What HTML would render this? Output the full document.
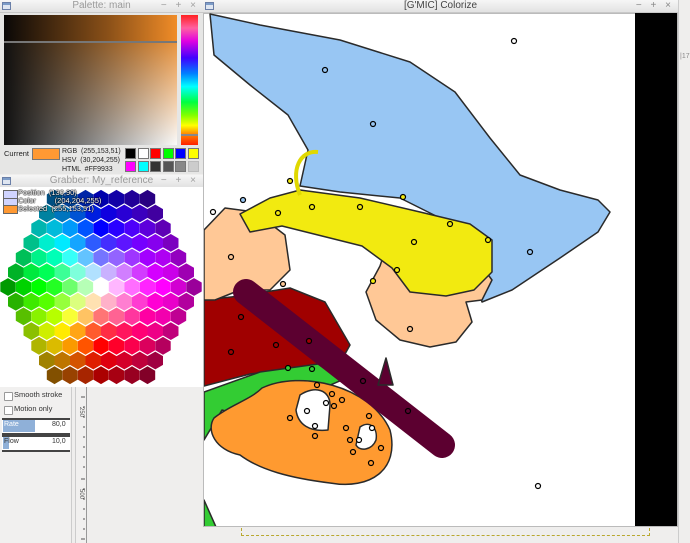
<!DOCTYPE html><html><head><style>
body{margin:0;width:690px;height:543px;overflow:hidden;background:#efeeed;font-family:"Liberation Sans","DejaVu Sans",sans-serif;position:relative}
.a{position:absolute}
.tb{position:absolute;height:12px;background:linear-gradient(#f6f6f6,#e2e2e2);border-bottom:1px solid #c8c8c8;font-size:10px;color:#9a9a9a;text-align:center;line-height:12px}
.ic{position:absolute;left:2px;top:2px;width:9px;height:8px;background:linear-gradient(#7c9cc8 0 35%,#dfe6f1 35%);border:1px solid #6a7fa8;box-sizing:border-box}
.ctl{position:absolute;right:4px;top:0;font-size:10px;color:#a0a0a0;letter-spacing:3px}
.sw{position:absolute;width:11px;height:11px;border:1px solid #777;box-sizing:border-box}
</style></head><body>
<div class="a" style="left:0;top:0;width:203px;height:174px;background:#e6e6e5;border-right:1px solid #bbb"></div>
<div class="tb" style="left:0;top:0;width:203px">Palette: main<div class="ic"></div><div class="ctl">− + ×</div></div>
<div class="a" style="left:4px;top:15px;width:173px;height:26px;background:linear-gradient(90deg,#0a0807,#8a5018 60%,#f08c28)"></div>
<div class="a" style="left:4px;top:41px;width:173px;height:2px;background:#777"></div>
<div class="a" style="left:4px;top:43px;width:173px;height:102px;background:linear-gradient(90deg,#111,rgba(17,17,17,0)),linear-gradient(180deg,#e89440,#fafafa)"></div>
<div class="a" style="left:181px;top:15px;width:17px;height:130px;background:linear-gradient(#ff2020,#ff60a0 10%,#e000e0 20%,#4000ff 33%,#0080ff 45%,#00ffff 55%,#00ff40 67%,#80ff00 77%,#ffff00 85%,#ff8000 92%,#ff2000)"></div>
<div class="a" style="left:181px;top:134px;width:17px;height:2px;background:#888"></div>
<div class="a" style="left:4px;top:149px;font-size:7.5px;color:#222">Current</div>
<div class="a" style="left:32px;top:148px;width:26px;height:10px;background:#ff9933;border:1px solid #777"></div>
<div class="a" style="left:62px;top:147px;font-size:7px;line-height:9px;color:#222">RGB &nbsp;(255,153,51)<br>HSV &nbsp;(30,204,255)<br>HTML &nbsp;#FF9933</div>
<div class="sw" style="left:125px;top:148px;background:#000"></div>
<div class="sw" style="left:138px;top:148px;background:#fff"></div>
<div class="sw" style="left:150px;top:148px;background:#f00"></div>
<div class="sw" style="left:163px;top:148px;background:#0f0"></div>
<div class="sw" style="left:175px;top:148px;background:#00f"></div>
<div class="sw" style="left:188px;top:148px;background:#ff0"></div>
<div class="sw" style="left:125px;top:161px;background:#f0f"></div>
<div class="sw" style="left:138px;top:161px;background:#0ff"></div>
<div class="sw" style="left:150px;top:161px;background:#333"></div>
<div class="sw" style="left:163px;top:161px;background:#555"></div>
<div class="sw" style="left:175px;top:161px;background:#888"></div>
<div class="sw" style="left:188px;top:161px;background:#ccc;border-color:#bbb"></div>
<div class="tb" style="left:0;top:175px;width:203px">Grabber: My_reference<div class="ic"></div><div class="ctl">− + ×</div></div>
<div class="a" style="left:0;top:187px;width:203px;height:200px;background:#fff;border-right:1px solid #bbb"></div>
<svg class="a" id="hex" style="left:0;top:187px" width="203" height="200"></svg>
<div class="a" style="left:3px;top:190px;width:13px;height:8px;background:#d0d4ff;border:1px solid #666"></div>
<div class="a" style="left:3px;top:198px;width:13px;height:7px;background:#d0d4ff;border:1px solid #666"></div>
<div class="a" style="left:3px;top:205px;width:13px;height:7px;background:#ff9933;border:1px solid #666"></div>
<div class="a" style="left:18px;top:189px;font-size:7.5px;line-height:8px;color:#fff;text-shadow:0 0 1px #000,0 0 1px #000,0 0 1px #000">Position&nbsp; (130,90)<br>Color &nbsp;&nbsp;&nbsp;&nbsp;&nbsp;&nbsp;&nbsp;&nbsp;(204,204,255)<br>Selected&nbsp; (255,153,51)</div>
<div class="a" style="left:0;top:387px;width:71px;height:156px;background:#f1f0ef;border-right:1px solid #ccc"></div>
<div class="a" style="left:4px;top:392px;width:7px;height:7px;border:1px solid #999;background:#fff;border-radius:1px"></div>
<div class="a" style="left:14px;top:390px;font-size:7.5px;color:#333">Smooth stroke</div>
<div class="a" style="left:4px;top:406px;width:7px;height:7px;border:1px solid #999;background:#fff;border-radius:1px"></div>
<div class="a" style="left:14px;top:404px;font-size:7.5px;color:#333">Motion only</div>
<div class="a" style="left:2px;top:418px;width:68px;height:13px;background:#fff;border-top:2px solid #444;border-bottom:2px solid #444"></div>
<div class="a" style="left:3px;top:420px;width:32px;height:12px;background:#8fb0d8"></div>
<div class="a" style="left:4px;top:421px;font-size:7px;color:#fff">Rate</div>
<div class="a" style="left:52px;top:421px;font-size:7px;color:#333">80,0</div>
<div class="a" style="left:2px;top:435px;width:68px;height:13px;background:#fff;border-top:2px solid #444;border-bottom:2px solid #444"></div>
<div class="a" style="left:3px;top:437px;width:6px;height:12px;background:#8fb0d8"></div>
<div class="a" style="left:4px;top:438px;font-size:7px;color:#333">Flow</div>
<div class="a" style="left:52px;top:438px;font-size:7px;color:#333">10,0</div>
<div class="a" style="left:75px;top:387px;width:10px;height:156px;background:#f1f0ef;border-left:1px solid #ccc;border-right:1px solid #999"></div>
<svg class="a" style="left:76px;top:387px" width="10" height="156"><g stroke="#555"><line x1="5" y1="10" x2="9" y2="10"/><line x1="7" y1="20" x2="9" y2="20"/><line x1="7" y1="30" x2="9" y2="30"/><line x1="7" y1="40" x2="9" y2="40"/><line x1="7" y1="50" x2="9" y2="50"/><line x1="7" y1="60" x2="9" y2="60"/><line x1="7" y1="70" x2="9" y2="70"/><line x1="7" y1="80" x2="9" y2="80"/><line x1="5" y1="92" x2="9" y2="92"/><line x1="7" y1="102" x2="9" y2="102"/><line x1="7" y1="112" x2="9" y2="112"/><line x1="7" y1="122" x2="9" y2="122"/><line x1="7" y1="132" x2="9" y2="132"/><line x1="7" y1="142" x2="9" y2="142"/><line x1="5" y1="152" x2="9" y2="152"/></g><text x="2" y="22" font-size="6" fill="#555" transform="rotate(90 4 22)">250</text><text x="2" y="104" font-size="6" fill="#555" transform="rotate(90 4 104)">500</text></svg>
<div class="a" style="left:678px;top:0;width:12px;height:543px;background:#efeeed;border-left:1px solid #ccc"></div>
<div class="a" style="left:680px;top:53px;font-size:7px;color:#888">|17</div>
<div class="a" style="left:241px;top:528px;width:407px;height:7px;border:1px dashed #b8a830;border-top:none"></div>
<div class="tb" style="left:203px;top:0;width:475px;color:#444">[G'MIC] Colorize<div class="ic"></div><div class="ctl" style="color:#888">− + ×</div></div>
<div class="a" style="left:203px;top:13px;width:475px;height:514px;background:#fff;border:1px solid #bbb;box-sizing:border-box"></div>
<div class="a" style="left:635px;top:13px;width:42px;height:513px;background:#000"></div>
<svg class="a" style="left:204px;top:13px" width="431" height="513" viewBox="204 13 431 513">
<g stroke="#2a2a2a" stroke-width="1.5" stroke-linejoin="round">
<polygon fill="#98c6f3" points="210,14 260,25 340,40 410,62 455,92 490,138 520,175 560,190 598,200 610,212 598,232 560,258 512,290 482,302 470,262 440,218 400,198 340,192 300,186 308,150 288,115 250,85 214,55"/>
<polygon fill="#a00000" points="204,300 240,296 290,288 325,302 350,345 335,372 300,368 250,374 204,386"/>
<polygon fill="#ffc896" points="204,230 225,208 255,212 285,235 290,270 270,290 240,290 215,300 204,300"/>
<polygon fill="#ffc896" points="388,242 430,236 470,250 492,280 482,300 466,302 472,322 456,342 430,347 400,340 376,320 366,292 380,266"/>
<polygon fill="#f2ea10" points="240,214 270,198 300,190 360,198 420,212 470,224 492,240 492,272 474,290 446,296 410,292 392,268 362,246 322,236 282,226 250,232"/>
<path fill="none" stroke="#e0d800" stroke-width="4" d="M300,195 C290,170 300,150 318,152"/>
<polygon fill="#33cc33" points="204,392 260,372 318,364 342,380 300,398 256,420 222,410 204,440"/>
<polygon fill="#33cc33" points="204,500 216,527 204,527"/>
<path fill="#ff9a30" d="M262,388 C300,370 370,385 390,430 C400,470 370,490 330,483 C290,478 260,470 240,455 C215,450 206,430 214,418 C230,405 250,400 262,388Z"/>
<line x1="246" y1="292" x2="442" y2="445" stroke="#5c0030" stroke-width="26" stroke-linecap="round"/>
<polygon fill="#5c0030" points="378,385 386,358 393,385"/>
<path fill="#fff" d="M300,395 C315,385 330,390 330,405 L328,430 C310,432 298,425 296,410Z"/>
<path fill="#fff" d="M360,427 C370,420 378,428 376,440 C372,450 360,452 356,445Z"/>
</g>
<g stroke="#000" stroke-width="1.2">
<circle cx="514" cy="41" r="2.5" fill="#fff"/><circle cx="325" cy="70" r="2.5" fill="#98c6f3"/><circle cx="373" cy="124" r="2.5" fill="#98c6f3"/><circle cx="530" cy="252" r="2.5" fill="#98c6f3"/><circle cx="213" cy="212" r="2.5" fill="#fff"/><circle cx="243" cy="200" r="2.5" fill="#98c6f3"/>
<circle cx="278" cy="213" r="2.5" fill="#f2ea10"/><circle cx="312" cy="207" r="2.5" fill="#f2ea10"/><circle cx="360" cy="207" r="2.5" fill="#f2ea10"/><circle cx="403" cy="197" r="2.5" fill="#f2ea10"/><circle cx="450" cy="224" r="2.5" fill="#f2ea10"/><circle cx="488" cy="240" r="2.5" fill="#f2ea10"/><circle cx="373" cy="281" r="2.5" fill="#f2ea10"/><circle cx="414" cy="242" r="2.5" fill="#f2ea10"/><circle cx="397" cy="270" r="2.5" fill="#f2ea10"/><circle cx="290" cy="181" r="2.5" fill="#f2ea10"/>
<circle cx="231" cy="257" r="2.5" fill="#ffc896"/><circle cx="283" cy="284" r="2.5" fill="#ffc896"/><circle cx="410" cy="329" r="2.5" fill="#ffc896"/><circle cx="241" cy="317" r="2.5" fill="#a00000"/><circle cx="231" cy="352" r="2.5" fill="#a00000"/><circle cx="276" cy="345" r="2.5" fill="#a00000"/><circle cx="309" cy="341" r="2.5" fill="#a00000"/>
<circle cx="288" cy="368" r="2.5" fill="#33cc33"/><circle cx="312" cy="369" r="2.5" fill="#33cc33"/><circle cx="363" cy="381" r="2.5" fill="#5c0030"/><circle cx="408" cy="411" r="2.5" fill="#5c0030"/>
<circle cx="317" cy="385" r="2.5" fill="#ff9a30"/><circle cx="332" cy="394" r="2.5" fill="#ff9a30"/><circle cx="342" cy="400" r="2.5" fill="#ff9a30"/><circle cx="334" cy="406" r="2.5" fill="#ff9a30"/><circle cx="290" cy="418" r="2.5" fill="#ff9a30"/><circle cx="315" cy="436" r="2.5" fill="#ff9a30"/><circle cx="346" cy="428" r="2.5" fill="#ff9a30"/><circle cx="369" cy="416" r="2.5" fill="#ff9a30"/><circle cx="350" cy="440" r="2.5" fill="#ff9a30"/><circle cx="353" cy="452" r="2.5" fill="#ff9a30"/><circle cx="381" cy="448" r="2.5" fill="#ff9a30"/><circle cx="371" cy="463" r="2.5" fill="#ff9a30"/>
<circle cx="307" cy="411" r="2.5" fill="#fff"/><circle cx="326" cy="403" r="2.5" fill="#fff"/><circle cx="315" cy="426" r="2.5" fill="#fff"/><circle cx="372" cy="428" r="2.5" fill="#fff"/><circle cx="359" cy="440" r="2.5" fill="#fff"/><circle cx="538" cy="486" r="2.5" fill="#fff"/>
</g>
</svg>
<script>
var s=document.getElementById('hex'),h='';
function hsv(H,S,V){H=((H%360)+360)%360;var c=V*S,x=c*(1-Math.abs((H/60)%2-1)),m=V-c,r,g,b;
if(H<60){r=c;g=x;b=0}else if(H<120){r=x;g=c;b=0}else if(H<180){r=0;g=c;b=x}else if(H<240){r=0;g=x;b=c}else if(H<300){r=x;g=0;b=c}else{r=c;g=0;b=x}
return 'rgb('+Math.round((r+m)*255)+','+Math.round((g+m)*255)+','+Math.round((b+m)*255)+')'}
var cx=101,cy=100,dx=15.5,dy=14.7,R=8.9;
for(var row=-6;row<=6;row++){var n=13-Math.abs(row);
for(var i=0;i<n;i++){var x=cx+(i-(n-1)/2)*dx,y=cy+row*dy;
var vx=x-cx,vy=y-cy,r=Math.sqrt(vx*vx+vy*vy)/dx;
var th=Math.atan2(vx,-vy)*180/Math.PI;if(th<0)th+=360;
var H=th<=180?240+th*2/3:360+(th-180)*4/3;
var S=Math.min(1,r/3.5),V=r>4.2?1-(r-4.2)*0.22:1;
var p='';for(var k=0;k<6;k++){var a=(60*k-90)*Math.PI/180;p+=(x+R*Math.cos(a)).toFixed(1)+','+(y+R*Math.sin(a)).toFixed(1)+' '}
h+='<polygon points="'+p+'" fill="'+hsv(H,S,V)+'"/>'}}
s.innerHTML=h;
</script>
</body></html>
